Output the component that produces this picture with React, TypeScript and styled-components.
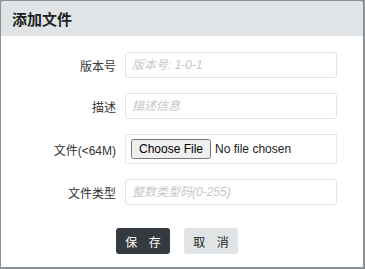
import styled, { createGlobalStyle } from "styled-components";

const GlobalStyle = createGlobalStyle`
  html, body {
    margin: 0;
    padding: 0;
    background: #8c9196;
  }
  body {
    font-family: "Liberation Sans", "Noto Sans CJK SC", sans-serif;
  }
`;

const fields = [
  { label: "版本号", placeholder: "版本号: 1-0-1" },
  { label: "描述", placeholder: "描述信息" },
  { label: "文件(<64M)", file: true },
  { label: "文件类型", placeholder: "整数类型码(0-255)" },
];

export default function App() {
  return (
    <>
      <GlobalStyle />
      <Backdrop>
        <Modal>
          <Header>添加文件</Header>
          <Body>
            {fields.map((field) => (
              <Row key={field.label} $file={field.file}>
                <Label>{field.label}</Label>
                {field.file ? (
                  <FileBox>
                    <input type="file" />
                  </FileBox>
                ) : (
                  <TextInput placeholder={field.placeholder} />
                )}
              </Row>
            ))}
          </Body>
          <Footer>
            <Button $primary>保 存</Button>
            <Button>取 消</Button>
          </Footer>
        </Modal>
      </Backdrop>
    </>
  );
}

const Backdrop = styled.div`
  width: 365px;
  height: 269px;
  padding: 1px 2px 2px 1px;
  box-sizing: border-box;
`;

const Modal = styled.div`
  width: 362px;
  height: 266px;
  background: #fff;
  border-radius: 3px 3px 0 0;
  overflow: hidden;
  display: flex;
  flex-direction: column;
`;

const Header = styled.div`
  height: 35px;
  background: #e1e4e7;
  display: flex;
  align-items: center;
  padding-left: 11px;
  font-size: 15px;
  font-weight: bold;
  color: #222;
`;

const Body = styled.div`
  display: flex;
  flex-direction: column;
  padding-top: 16px;
  gap: 15px;
`;

const Row = styled.div<{ $file?: boolean }>`
  display: grid;
  grid-template-columns: 115px 212px;
  column-gap: 9px;
  align-items: center;
  height: ${(p) => (p.$file ? "30px" : "26px")};
`;

const Label = styled.label`
  text-align: right;
  font-size: 12px;
  color: #333;
`;

const TextInput = styled.input`
  box-sizing: border-box;
  height: 26px;
  width: 212px;
  border: 1px solid #dfe2e5;
  border-radius: 3px;
  padding: 0 6px;
  font-size: 12px;
  font-family: "Liberation Sans", "Noto Sans CJK SC", sans-serif;
  outline: none;
  &::placeholder {
    color: #c4c8cc;
    font-style: italic;
  }
`;

const FileBox = styled.div`
  box-sizing: border-box;
  height: 30px;
  width: 212px;
  border: 1px solid #e6e8ea;
  display: flex;
  align-items: center;
  padding-left: 5px;
  input {
    font-size: 12px;
    font-family: "Liberation Sans", sans-serif;
    color: #222;
  }
`;

const Footer = styled.div`
  display: flex;
  gap: 14px;
  padding: 23px 0 0 115px;
`;

const Button = styled.button<{ $primary?: boolean }>`
  width: 54px;
  height: 26px;
  border: none;
  border-radius: 3px;
  font-size: 12px;
  letter-spacing: 4px;
  padding: 0 0 0 4px;
  font-family: "Liberation Sans", "Noto Sans CJK SC", sans-serif;
  background: ${(p) => (p.$primary ? "#343a40" : "#e1e4e7")};
  color: ${(p) => (p.$primary ? "#fff" : "#222")};
`;
